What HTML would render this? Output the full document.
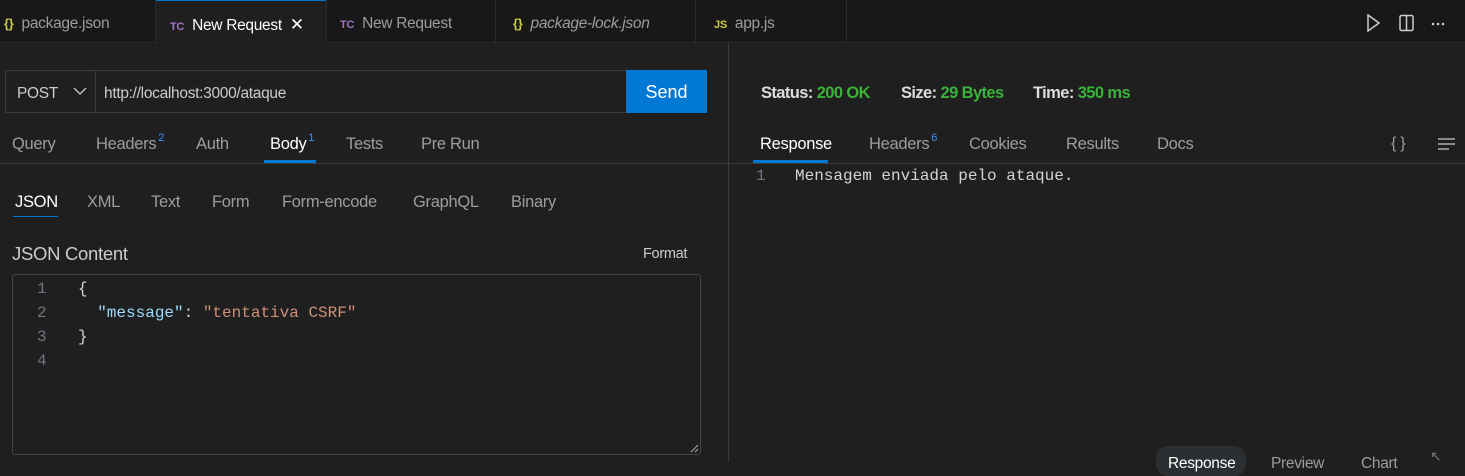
<!DOCTYPE html>
<html><head><meta charset="utf-8"><style>
*{margin:0;padding:0;box-sizing:border-box}
body{width:1465px;height:462px;background:#1f1f1f;font-family:"Liberation Sans",sans-serif;color:#ccc;position:relative;overflow:hidden}
.a{position:absolute;white-space:nowrap}
.t{font-size:15.5px;letter-spacing:-0.3px}
.m{font-family:"Liberation Mono",monospace;font-size:16px}
sup{font-size:11px;color:#3794ff;position:relative;top:-3px;vertical-align:top;margin-left:2px}
</style></head><body>
<div class="a" style="left:0;top:0;width:1465px;height:43px;background:#181818;border-bottom:1px solid #2b2b2b"></div>
<div class="a" style="left:156px;top:0;width:170px;height:44px;background:#1f1f1f;border-top:1px solid #0078d4"></div>
<div class="a" style="left:155px;top:0;width:1px;height:43px;background:#2b2b2b"></div>
<div class="a" style="left:326px;top:0;width:1px;height:43px;background:#2b2b2b"></div>
<div class="a" style="left:495px;top:0;width:1px;height:43px;background:#2b2b2b"></div>
<div class="a" style="left:695px;top:0;width:1px;height:43px;background:#2b2b2b"></div>
<div class="a" style="left:846px;top:0;width:1px;height:43px;background:#2b2b2b"></div>
<div class="a t" style="left:4px;top:15px;color:#9d9d9d"><b style="color:#cbcb41;font-size:13px">{}</b> &nbsp;package.json</div>
<div class="a t" style="left:170px;top:15px;color:#fff"><b style="color:#a074c4;font-size:11px">TC</b>&nbsp; New Request &nbsp;<span style="font-size:17px">✕</span></div>
<div class="a t" style="left:340px;top:15px;color:#9d9d9d"><b style="color:#a074c4;font-size:11px">TC</b>&nbsp; New Request</div>
<div class="a t" style="left:513px;top:15px;color:#9d9d9d;font-style:italic"><b style="color:#cbcb41;font-size:13px;font-style:normal">{}</b> &nbsp;package-lock.json</div>
<div class="a t" style="left:714px;top:15px;color:#9d9d9d"><b style="color:#cbcb41;font-size:11px">JS</b>&nbsp; app.js</div>
<svg class="a" style="left:1366px;top:14px" width="80" height="18"><path d="M2 1 L13 9 L2 17 Z" fill="none" stroke="#ccc" stroke-width="1.5"/><rect x="34" y="1.5" width="13" height="15" rx="1.5" fill="none" stroke="#ccc" stroke-width="1.5"/><line x1="40.5" y1="2" x2="40.5" y2="16" stroke="#ccc" stroke-width="1.5"/><circle cx="67" cy="10" r="1.3" fill="#ccc"/><circle cx="72" cy="10" r="1.3" fill="#ccc"/><circle cx="77" cy="10" r="1.3" fill="#ccc"/></svg>
<div class="a" style="left:728px;top:44px;width:1px;height:418px;background:#3c3c3c"></div>
<div class="a" style="left:5px;top:70px;width:622px;height:43px;border:1px solid #3c3c3c;background:#1f1f1f"></div>
<div class="a" style="left:95px;top:70px;width:1px;height:43px;background:#3c3c3c"></div>
<div class="a t" style="left:17px;top:85px;color:#ccc">POST</div>
<svg class="a" style="left:73px;top:87px" width="14" height="9"><path d="M1 1 L7 7 L13 1" fill="none" stroke="#ccc" stroke-width="1.3"/></svg>
<div class="a t" style="left:104px;top:85px;color:#ccc">http://localhost:3000/ataque</div>
<div class="a" style="left:626px;top:70px;width:81px;height:43px;background:#0078d4;color:#fff;font-size:18px;text-align:center;line-height:44px">Send</div>
<div class="a t" style="left:12px;top:135px;font-size:16.5px;color:#9d9d9d">Query</div>
<div class="a t" style="left:96px;top:135px;font-size:16.5px;color:#9d9d9d">Headers<sup>2</sup></div>
<div class="a t" style="left:196px;top:135px;font-size:16.5px;color:#9d9d9d">Auth</div>
<div class="a t" style="left:270px;top:135px;font-size:16.5px;color:#fff">Body<sup>1</sup></div>
<div class="a t" style="left:346px;top:135px;font-size:16.5px;color:#9d9d9d">Tests</div>
<div class="a t" style="left:421px;top:135px;font-size:16.5px;color:#9d9d9d">Pre Run</div>
<div class="a" style="left:264px;top:160px;width:52px;height:3px;background:#0078d4"></div>
<div class="a" style="left:0;top:163px;width:728px;height:1px;background:#3c3c3c"></div>
<div class="a t" style="left:15px;top:193px;font-size:16.5px;color:#fff">JSON</div>
<div class="a" style="left:13px;top:216px;width:45px;height:1px;background:#0078d4"></div>
<div class="a t" style="left:87px;top:193px;font-size:16.5px;color:#9d9d9d">XML</div>
<div class="a t" style="left:151px;top:193px;font-size:16.5px;color:#9d9d9d">Text</div>
<div class="a t" style="left:212px;top:193px;font-size:16.5px;color:#9d9d9d">Form</div>
<div class="a t" style="left:282px;top:193px;font-size:16.5px;color:#9d9d9d">Form-encode</div>
<div class="a t" style="left:413px;top:193px;font-size:16.5px;color:#9d9d9d">GraphQL</div>
<div class="a t" style="left:511px;top:193px;font-size:16.5px;color:#9d9d9d">Binary</div>
<div class="a t" style="left:12px;top:243px;font-size:18.5px;color:#ccc">JSON Content</div>
<div class="a t" style="left:643px;top:246px;font-size:14.5px;color:#ccc">Format</div>
<div class="a" style="left:12px;top:274px;width:689px;height:181px;border:1px solid #444;border-radius:3px"></div>
<div class="a m" style="left:37px;top:277px;line-height:24px;color:#6e7681">1<br>2<br>3<br>4</div>
<div class="a m" style="left:78px;top:277px;line-height:24px;color:#d4d4d4;white-space:pre">{
  <span style="color:#9cdcfe">"message"</span>: <span style="color:#ce9178">"tentativa CSRF"</span>
}</div>
<svg class="a" style="left:690px;top:444px" width="9" height="9"><path d="M1 8 L8 1 M5 8 L8 5" stroke="#aaa"/></svg>
<div class="a t" style="left:761px;top:84px;font-size:16.5px;color:#ddd;font-weight:bold;letter-spacing:-0.6px">Status: <span style="color:#3bb33b">200 OK</span></div>
<div class="a t" style="left:901px;top:84px;font-size:16.5px;color:#ddd;font-weight:bold;letter-spacing:-0.6px">Size: <span style="color:#3bb33b">29 Bytes</span></div>
<div class="a t" style="left:1033px;top:84px;font-size:16.5px;color:#ddd;font-weight:bold;letter-spacing:-0.6px">Time: <span style="color:#3bb33b">350 ms</span></div>
<div class="a t" style="left:760px;top:135px;font-size:16.5px;color:#fff">Response</div>
<div class="a t" style="left:869px;top:135px;font-size:16.5px;color:#9d9d9d">Headers<sup>6</sup></div>
<div class="a t" style="left:969px;top:135px;font-size:16.5px;color:#9d9d9d">Cookies</div>
<div class="a t" style="left:1066px;top:135px;font-size:16.5px;color:#9d9d9d">Results</div>
<div class="a t" style="left:1157px;top:135px;font-size:16.5px;color:#9d9d9d">Docs</div>
<div class="a t" style="left:1391px;top:135px;font-size:16px;color:#9d9d9d">{ }</div>
<svg class="a" style="left:1437px;top:137px" width="20" height="14"><path d="M1 2h17M1 7h17M1 12h11" stroke="#ccc" stroke-width="1.3"/></svg>
<div class="a" style="left:753px;top:160px;width:75px;height:3px;background:#0078d4"></div>
<div class="a" style="left:729px;top:163px;width:736px;height:1px;background:#3c3c3c"></div>
<div class="a m" style="left:756px;top:167px;color:#6e7681">1</div>
<div class="a m" style="left:795px;top:167px;color:#d4d4d4">Mensagem enviada pelo ataque.</div>
<div class="a" style="left:1156px;top:446px;width:90px;height:30px;border-radius:12px;background:#2b2f31"></div>
<div class="a t" style="left:1168px;top:455px;color:#fff">Response</div>
<div class="a t" style="left:1271px;top:455px;color:#9d9d9d">Preview</div>
<div class="a t" style="left:1361px;top:455px;color:#9d9d9d">Chart</div>
<div class="a" style="left:1430px;top:448px;color:#777;font-size:14px">↖</div>
</body></html>
